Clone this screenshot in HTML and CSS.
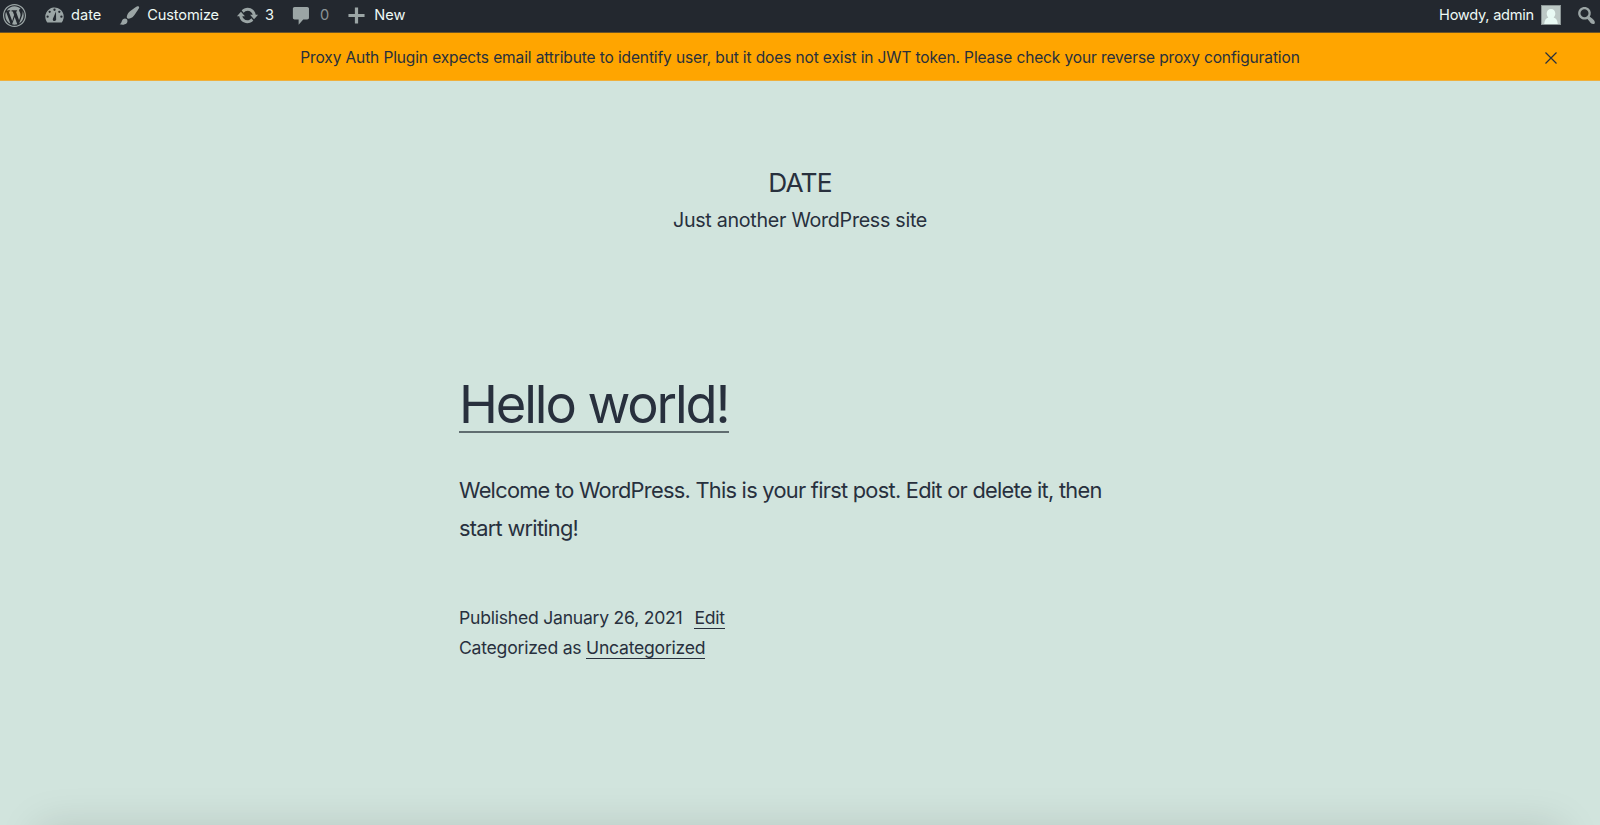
FILE: index.html
```html
<!DOCTYPE html>
<html lang="en">
<head>
    <meta charset="UTF-8">
    <meta name="viewport" content="width=device-width, initial-scale=1.0">
    <title>DATE – Just another WordPress site</title>
    <link rel="stylesheet" href="styles.css">
</head>
<body>
<div class="page">
    <div class="admin-bar">
        <a class="item logo"><svg class="icon" viewBox="0 0 20 20"><path d="M20 10c0-5.52-4.48-10-10-10S0 4.48 0 10s4.48 10 10 10 10-4.48 10-10zM10 1.01c4.97 0 8.99 4.02 8.99 8.99s-4.02 8.99-8.99 8.99S1.01 14.97 1.01 10 5.03 1.01 10 1.01zM8.01 14.82L4.96 6.61c.49-.03 1.05-.08 1.05-.08.43-.05.38-1.01-.06-.99 0 0-1.29.1-2.13.1-.15 0-.33 0-.52-.01 1.44-2.17 3.9-3.6 6.7-3.6 2.09 0 3.99.79 5.41 2.09-.6-.08-1.45.35-1.45 1.42 0 .66.38 1.22.79 1.88.31.54.5 1.22.5 2.21 0 1.34-1.27 4.48-1.27 4.48l-2.71-7.5c.48-.03.75-.16.75-.16.43-.05.38-1.1-.05-1.08 0 0-1.3.11-2.14.11-.78 0-2.11-.11-2.11-.11-.43-.02-.48 1.06-.05 1.08l.84.08 1.12 3.04zm6.02 2.15L16.64 10s.67-1.69.39-3.81c.63 1.14.94 2.42.94 3.81 0 2.96-1.56 5.58-3.94 6.97zM2.68 6.77L6.5 17.25c-2.67-1.3-4.47-4.08-4.47-7.25 0-1.16.2-2.23.65-3.23zm7.45 4.53l2.29 6.25c-.75.27-1.57.42-2.42.42-.72 0-1.41-.11-2.06-.3z"/></svg></a>
        <a class="item site"><svg class="icon" viewBox="0 0 20 20"><path d="M3.76 16h12.48A8 8 0 1 0 2 11c0 1.89.66 3.63 1.76 5z"/><g class="dots"><circle cx="10" cy="5" r="1"/><circle cx="5.8" cy="6.8" r="1"/><circle cx="14.2" cy="6.8" r="1"/><circle cx="4" cy="11" r="1"/><circle cx="16" cy="11" r="1"/><path d="M11.3 6.6l.1 6.2a1.5 1.5 0 1 1-2.7-.2z"/></g></svg><span>date</span></a>
        <a class="item customize"><svg class="icon" viewBox="0 0 20 20"><path d="M18.33 3.57s.27-.8-.31-1.36c-.53-.52-1.22-.24-1.22-.24-.61.3-5.76 3.47-7.67 5.57-.86.96-2.06 3.79-1.09 4.82.92.98 3.96-.17 4.79-1 2.06-2.06 5.21-7.17 5.5-7.79zM1.4 17.65c2.37-1.56 1.46-3.41 3.23-4.64.93-.65 2.22-.62 3.08.29.63.67.8 2.57-.16 3.46-1.57 1.45-4 1.55-6.15.89z"/></svg><span>Customize</span></a>
        <a class="item updates"><svg class="icon" viewBox="0 0 20 20"><path d="M10.2 3.28c3.53 0 6.43 2.61 6.92 6h2.08l-3.5 4-3.5-4h2.32c-.45-1.97-2.21-3.45-4.32-3.45-1.45 0-2.73.71-3.54 1.78L4.95 5.66C6.23 4.2 8.11 3.28 10.2 3.28zm-.4 13.44c-3.52 0-6.43-2.61-6.92-6H.8l3.5-4c1.17 1.33 2.33 2.67 3.5 4H5.48c.45 1.97 2.21 3.45 4.32 3.45 1.45 0 2.73-.71 3.54-1.78l1.71 1.95c-1.28 1.46-3.15 2.38-5.25 2.38z"/></svg><span>3</span></a>
        <a class="item comments"><svg class="icon" viewBox="0 0 20 20"><path d="M4 2.5h11c.8 0 1.5.7 1.5 1.5v8c0 .8-.7 1.5-1.5 1.5h-3.5L7.5 18v-4.5H4c-.8 0-1.5-.7-1.5-1.5V4c0-.8.7-1.5 1.5-1.5z"/></svg><span>0</span></a>
        <a class="item new"><svg class="icon" viewBox="0 0 20 20"><path d="M17 8.6v2.8h-5.6V17H8.6v-5.6H3V8.6h5.6V3h2.8v5.6H17z"/></svg><span>New</span></a>
        <a class="item account"><span>Howdy, admin</span><svg class="avatar" viewBox="0 0 20 20"><path class="frame" d="M0 0h20v20H0z"/><path class="back" d="M1 1h18v18H1z"/><path class="person" d="M10 4c2.6 0 4.3 1.9 4.3 4.5 0 1.7-.7 3.1-1.7 4 2.4.8 3.9 2.7 4.2 6.5H3.2c.3-3.8 1.8-5.7 4.2-6.5-1-.9-1.7-2.3-1.7-4C5.7 5.9 7.4 4 10 4z"/></svg></a>
        <a class="item search"><svg class="icon" viewBox="0 0 20 20"><path d="M12.14 4.18c1.87 1.87 2.11 4.75.72 6.89.12.1.22.21.36.31.2.16.47.36.81.59.34.24.56.39.66.47.42.31.73.57.94.78.32.32.6.65.84 1 .25.35.44.69.59 1.04.14.35.21.68.18 1-.02.32-.14.59-.36.81s-.49.34-.81.36c-.31.02-.65-.04-.99-.19-.35-.14-.7-.34-1.04-.59-.35-.24-.68-.52-1-.84-.21-.21-.47-.52-.77-.93-.1-.13-.25-.35-.47-.66-.22-.32-.4-.57-.56-.78-.16-.2-.29-.35-.44-.5-2.07 1.09-4.69.76-6.44-.98-2.14-2.15-2.14-5.64 0-7.78 2.15-2.15 5.63-2.15 7.78 0zm-1.41 6.36c1.36-1.37 1.36-3.58 0-4.95-1.37-1.37-3.59-1.37-4.95 0-1.37 1.37-1.37 3.58 0 4.95 1.36 1.37 3.58 1.37 4.95 0z"/></svg></a>
    </div>

    <div class="notice">
        <p>Proxy Auth Plugin expects email attribute to identify user, but it does not exist in JWT token. Please check your reverse proxy configuration</p>
        <svg class="close" viewBox="0 0 12 12"><path d="M.5.5l11 11M11.5.5l-11 11"/></svg>
    </div>

    <header class="site-header">
        <h1 class="site-title">DATE</h1>
        <p class="site-description">Just another WordPress site</p>
    </header>

    <main class="post">
        <h2 class="entry-title"><a>Hello world!</a></h2>
        <p class="entry-content">Welcome to WordPress. This is your first post. Edit or delete it, then start writing!</p>
        <footer class="entry-footer">
            <div><span class="posted-on">Published January 26, 2021</span><a>Edit</a></div>
            <div>Categorized as <a>Uncategorized</a></div>
        </footer>
    </main>

    <div class="bottom-shadow"></div>
</div>
</body>
</html>
```
FILE: styles.css
```css
* {
    box-sizing: border-box;
}
body {
    margin: 0;
    background: #d1e4dd;
    color: #28303d;
    font-family: Inter, "Liberation Sans", sans-serif;
}
h1, h2, p {
    margin: 0;
    font-weight: 400;
}
.page {
    position: relative;
    height: 825px;
    overflow: hidden;
}
.admin-bar {
    display: flex;
    height: 33px;
    padding: 0 2px 0 3px;
    background: #23282f;
    border-bottom: 1px solid #6b5327;
    color: #eefaf5;
    font-size: 14.6px;
    line-height: 30px;
}
.item {
    display: flex;
    align-items: center;
    height: 30px;
    white-space: nowrap;
}
.icon {
    width: 23px;
    height: 23px;
    fill: #9ba5a5;
}
.dots {
    fill: #23282f;
}
.site {
    margin-left: 17px;
    gap: 5px;
}
.customize {
    margin-left: 17px;
    gap: 6px;
    letter-spacing: -0.15px;
}
.updates {
    margin-left: 17px;
    gap: 6px;
}
.comments {
    margin-left: 16px;
    gap: 7px;
}
.comments span {
    color: #8b9396;
}
.new {
    margin-left: 16px;
    gap: 6px;
}
.account {
    margin-left: auto;
    gap: 7px;
    letter-spacing: -0.25px;
}
.avatar {
    width: 20px;
    height: 20px;
}
.frame {
    fill: #8c9696;
}
.back {
    fill: #bcc8c5;
}
.person {
    fill: #e9faf4;
}
.search {
    margin-left: 14px;
}
.notice {
    position: relative;
    height: 48px;
    background: #ffa500;
    border-bottom: 1px solid #efb03c;
    font-size: 15.5px;
    line-height: 49px;
    letter-spacing: -0.12px;
    text-align: center;
    white-space: nowrap;
}
.close {
    position: absolute;
    top: 19px;
    right: 43px;
    width: 12px;
    height: 12px;
    fill: none;
    stroke: #28303d;
    stroke-width: 1.2;
}
.site-header {
    padding-top: 82px;
    text-align: center;
}
.site-title {
    font-size: 26.3px;
    line-height: 40px;
    letter-spacing: -0.8px;
}
.site-description {
    font-size: 19.7px;
    line-height: 34px;
    letter-spacing: -0.29px;
}
.post {
    width: 682px;
    margin: 132px auto 0;
}
.entry-title {
    font-size: 52.4px;
    line-height: 70px;
    letter-spacing: -2.1px;
}
.entry-title a {
    display: inline-block;
    height: 64px;
    border-bottom: 2px solid #606d70;
}
.entry-content {
    margin-top: 32px;
    font-size: 21.8px;
    line-height: 38px;
    letter-spacing: -0.73px;
}
.entry-footer {
    margin-top: 56px;
    font-size: 17.6px;
    line-height: 30px;
    letter-spacing: -0.24px;
}
.entry-footer a {
    display: inline-block;
    height: 26px;
    border-bottom: 1px solid #28303d;
}
.posted-on {
    margin-right: 12px;
}
/* shadow rising from below the fold */
.bottom-shadow {
    position: absolute;
    top: 826px;
    left: 38px;
    right: 38px;
    height: 60px;
    box-shadow: 0 0 42px rgba(0, 0, 0, 0.13);
}
```
